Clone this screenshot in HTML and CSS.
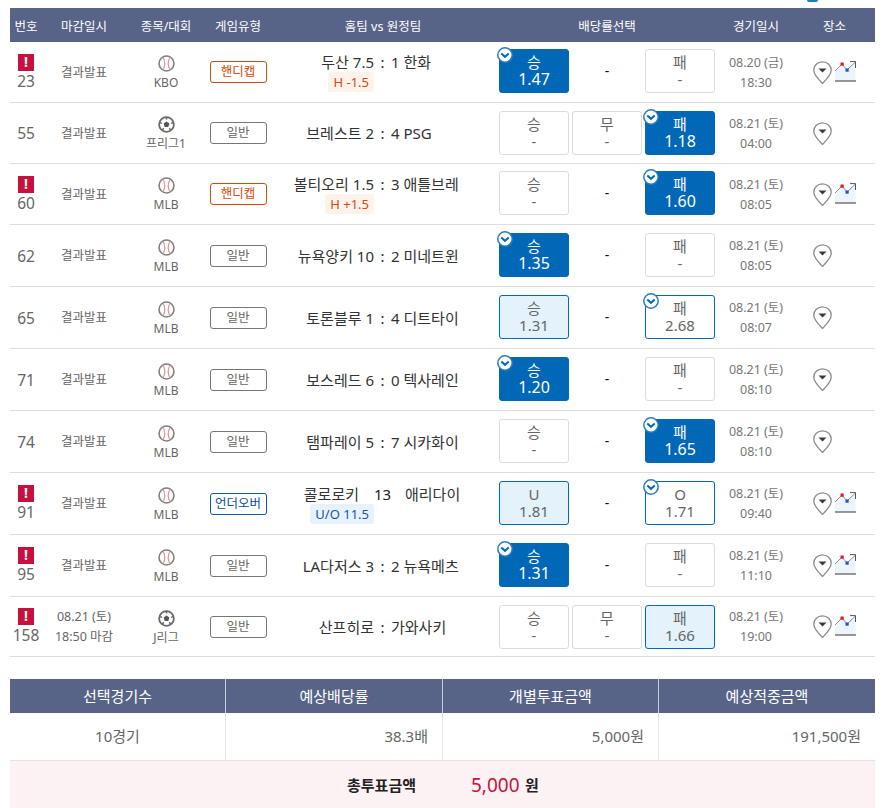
FILE: index.html
```html
<!DOCTYPE html>
<html lang="ko">
<head>
<meta charset="utf-8">
<title>투표 내역</title>
<link rel="stylesheet" href="styles.css">
</head>
<body>
<svg class="defs" width="0" height="0" aria-hidden="true">
  <symbol id="baseball" viewBox="0 0 18 18">
    <circle cx="9" cy="9" r="7.900" fill="#fff" stroke="#808080" stroke-width="1.700"/>
    <path d="M5.400 2.400C7.600 6.400 7.600 11.600 5.400 15.600M12.600 2.400C10.400 6.400 10.400 11.600 12.600 15.600" fill="none" stroke="#dc9a9a" stroke-width="1.200"/>
  </symbol>
  <symbol id="soccer" viewBox="0 0 18 18">
    <circle cx="9" cy="9" r="7.800" fill="#fff" stroke="#6a6a6a" stroke-width="1.900"/>
    <path d="M9 5.800l3 2.200-1.100 3.600H7.100L6 8z" fill="#555"/>
    <path d="M9 1.500v2.200M2 7l2.200.8M16 7l-2.200.8M4.600 15l1.500-2M13.400 15l-1.500-2" stroke="#666" stroke-width="1.600"/>
  </symbol>
  <symbol id="pin" viewBox="0 0 19 23">
    <path d="M9.500 .8C4.500 .8 .8 4.600 .8 9.200c0 4.600 5.200 9.600 8.700 13.200 3.500-3.600 8.700-8.600 8.700-13.200C18.200 4.600 14.500 .8 9.500 .8z" fill="#fff" stroke="#8c8c8c" stroke-width="1.300"/>
    <path d="M5.500 7.500h8L9.500 11.500z" fill="#3a3a3a"/>
  </symbol>
  <symbol id="chart" viewBox="0 0 21 21">
    <path d="M0 10L7 3l5 6L20.500 1V20H0z" fill="#edf4fc"/>
    <path d="M0 10L7 3l5 6L20.500 1" fill="none" stroke="#8a8f96" stroke-width="1"/>
    <path d="M15 .6h5.500V7" fill="none" stroke="#555" stroke-width="1"/>
    <path d="M0 20h21" stroke="#555" stroke-width="1.200"/>
    <rect x="5.500" y="1.500" width="3.200" height="3.200" fill="#e2142d"/>
    <rect x="10.500" y="7.500" width="3.200" height="3.200" fill="#1a55cf"/>
  </symbol>
  <symbol id="check" viewBox="0 0 16 16">
    <circle cx="8" cy="8" r="7.200" fill="#fff" stroke="#2f7cc0" stroke-width="1.500"/>
    <path d="M4.300 6.500L8 9.800l3.700-3.300" fill="none" stroke="#0167b7" stroke-width="2"/>
  </symbol>
</svg>

<div class="top-mark"></div>

<main class="page">
  <div class="head-row">
    <div>번호</div><div>마감일시</div><div>종목/대회</div><div>게임유형</div>
    <div>홈팀 vs 원정팀</div><div>배당률선택</div><div>경기일시</div><div>장소</div>
  </div>

  <div class="row row-61 row-up">
    <div class="no"><span class="flag">!</span><span>23</span></div>
    <div class="close">결과발표</div>
    <div class="sport"><svg class="ball"><use href="#baseball"/></svg><span>KBO</span></div>
    <div class="type"><span class="badge badge-hc">핸디캡</span></div>
    <div class="match"><span class="home">두산 7.5</span><span class="colon">:</span><span class="away">1 한화</span><span class="tag tag-hc">H -1.5</span></div>
    <div class="odds">
      <div class="bet on"><svg class="tick"><use href="#check"/></svg><b>승</b><i>1.47</i></div>
      <div class="none">-</div>
      <div class="bet"><b>패</b><i>-</i></div>
    </div>
    <div class="when">08.20 (금)<br>18:30</div>
    <div class="place"><svg class="pin"><use href="#pin"/></svg><svg class="chart"><use href="#chart"/></svg></div>
  </div>

  <div class="row row-61">
    <div class="no"><span>55</span></div>
    <div class="close">결과발표</div>
    <div class="sport"><svg class="ball"><use href="#soccer"/></svg><span>프리그1</span></div>
    <div class="type"><span class="badge">일반</span></div>
    <div class="match"><span class="home">브레스트 2</span><span class="colon">:</span><span class="away">4 PSG</span></div>
    <div class="odds">
      <div class="bet"><b>승</b><i>-</i></div>
      <div class="bet"><b>무</b><i>-</i></div>
      <div class="bet on"><svg class="tick"><use href="#check"/></svg><b>패</b><i>1.18</i></div>
    </div>
    <div class="when">08.21 (토)<br>04:00</div>
    <div class="place"><svg class="pin"><use href="#pin"/></svg></div>
  </div>

  <div class="row row-61 row-up">
    <div class="no"><span class="flag">!</span><span>60</span></div>
    <div class="close">결과발표</div>
    <div class="sport"><svg class="ball"><use href="#baseball"/></svg><span>MLB</span></div>
    <div class="type"><span class="badge badge-hc">핸디캡</span></div>
    <div class="match"><span class="home">볼티오리 1.5</span><span class="colon">:</span><span class="away">3 애틀브레</span><span class="tag tag-hc">H +1.5</span></div>
    <div class="odds">
      <div class="bet"><b>승</b><i>-</i></div>
      <div class="none">-</div>
      <div class="bet on"><svg class="tick"><use href="#check"/></svg><b>패</b><i>1.60</i></div>
    </div>
    <div class="when">08.21 (토)<br>08:05</div>
    <div class="place"><svg class="pin"><use href="#pin"/></svg><svg class="chart"><use href="#chart"/></svg></div>
  </div>

  <div class="row">
    <div class="no"><span>62</span></div>
    <div class="close">결과발표</div>
    <div class="sport"><svg class="ball"><use href="#baseball"/></svg><span>MLB</span></div>
    <div class="type"><span class="badge">일반</span></div>
    <div class="match"><span class="home">뉴욕양키 10</span><span class="colon">:</span><span class="away">2 미네트윈</span></div>
    <div class="odds">
      <div class="bet on"><svg class="tick"><use href="#check"/></svg><b>승</b><i>1.35</i></div>
      <div class="none">-</div>
      <div class="bet"><b>패</b><i>-</i></div>
    </div>
    <div class="when">08.21 (토)<br>08:05</div>
    <div class="place"><svg class="pin"><use href="#pin"/></svg></div>
  </div>

  <div class="row">
    <div class="no"><span>65</span></div>
    <div class="close">결과발표</div>
    <div class="sport"><svg class="ball"><use href="#baseball"/></svg><span>MLB</span></div>
    <div class="type"><span class="badge">일반</span></div>
    <div class="match"><span class="home">토론블루 1</span><span class="colon">:</span><span class="away">4 디트타이</span></div>
    <div class="odds">
      <div class="bet light"><b>승</b><i>1.31</i></div>
      <div class="none">-</div>
      <div class="bet pick"><svg class="tick"><use href="#check"/></svg><b>패</b><i>2.68</i></div>
    </div>
    <div class="when">08.21 (토)<br>08:07</div>
    <div class="place"><svg class="pin"><use href="#pin"/></svg></div>
  </div>

  <div class="row">
    <div class="no"><span>71</span></div>
    <div class="close">결과발표</div>
    <div class="sport"><svg class="ball"><use href="#baseball"/></svg><span>MLB</span></div>
    <div class="type"><span class="badge">일반</span></div>
    <div class="match"><span class="home">보스레드 6</span><span class="colon">:</span><span class="away">0 텍사레인</span></div>
    <div class="odds">
      <div class="bet on"><svg class="tick"><use href="#check"/></svg><b>승</b><i>1.20</i></div>
      <div class="none">-</div>
      <div class="bet"><b>패</b><i>-</i></div>
    </div>
    <div class="when">08.21 (토)<br>08:10</div>
    <div class="place"><svg class="pin"><use href="#pin"/></svg></div>
  </div>

  <div class="row">
    <div class="no"><span>74</span></div>
    <div class="close">결과발표</div>
    <div class="sport"><svg class="ball"><use href="#baseball"/></svg><span>MLB</span></div>
    <div class="type"><span class="badge">일반</span></div>
    <div class="match"><span class="home">탬파레이 5</span><span class="colon">:</span><span class="away">7 시카화이</span></div>
    <div class="odds">
      <div class="bet"><b>승</b><i>-</i></div>
      <div class="none">-</div>
      <div class="bet on"><svg class="tick"><use href="#check"/></svg><b>패</b><i>1.65</i></div>
    </div>
    <div class="when">08.21 (토)<br>08:10</div>
    <div class="place"><svg class="pin"><use href="#pin"/></svg></div>
  </div>

  <div class="row">
    <div class="no"><span class="flag">!</span><span>91</span></div>
    <div class="close">결과발표</div>
    <div class="sport"><svg class="ball"><use href="#baseball"/></svg><span>MLB</span></div>
    <div class="type"><span class="badge badge-uo">언더오버</span></div>
    <div class="match match-wide"><span class="home">콜로로키</span><span class="colon">13</span><span class="away">애리다이</span><span class="tag tag-uo">U/O 11.5</span></div>
    <div class="odds">
      <div class="bet light"><b>U</b><i>1.81</i></div>
      <div class="none">-</div>
      <div class="bet pick"><svg class="tick"><use href="#check"/></svg><b>O</b><i>1.71</i></div>
    </div>
    <div class="when">08.21 (토)<br>09:40</div>
    <div class="place"><svg class="pin"><use href="#pin"/></svg><svg class="chart"><use href="#chart"/></svg></div>
  </div>

  <div class="row">
    <div class="no"><span class="flag">!</span><span>95</span></div>
    <div class="close">결과발표</div>
    <div class="sport"><svg class="ball"><use href="#baseball"/></svg><span>MLB</span></div>
    <div class="type"><span class="badge">일반</span></div>
    <div class="match"><span class="home">LA다저스 3</span><span class="colon">:</span><span class="away">2 뉴욕메츠</span></div>
    <div class="odds">
      <div class="bet on"><svg class="tick"><use href="#check"/></svg><b>승</b><i>1.31</i></div>
      <div class="none">-</div>
      <div class="bet"><b>패</b><i>-</i></div>
    </div>
    <div class="when">08.21 (토)<br>11:10</div>
    <div class="place"><svg class="pin"><use href="#pin"/></svg><svg class="chart"><use href="#chart"/></svg></div>
  </div>

  <div class="row row-60">
    <div class="no"><span class="flag">!</span><span>158</span></div>
    <div class="close close-time">08.21 (토)<br>18:50 마감</div>
    <div class="sport"><svg class="ball"><use href="#soccer"/></svg><span>J리그</span></div>
    <div class="type"><span class="badge">일반</span></div>
    <div class="match"><span class="home">산프히로</span><span class="colon">:</span><span class="away">가와사키</span></div>
    <div class="odds">
      <div class="bet"><b>승</b><i>-</i></div>
      <div class="bet"><b>무</b><i>-</i></div>
      <div class="bet light"><b>패</b><i>1.66</i></div>
    </div>
    <div class="when">08.21 (토)<br>19:00</div>
    <div class="place"><svg class="pin"><use href="#pin"/></svg><svg class="chart"><use href="#chart"/></svg></div>
  </div>

  <section class="summary">
    <div class="sum-head">선택경기수</div>
    <div class="sum-head">예상배당률</div>
    <div class="sum-head">개별투표금액</div>
    <div class="sum-head">예상적중금액</div>
    <div class="sum-cell sum-center">10경기</div>
    <div class="sum-cell">38.3배</div>
    <div class="sum-cell">5,000원</div>
    <div class="sum-cell">191,500원</div>
  </section>
  <div class="total">
    <strong class="total-label">총투표금액</strong>
    <span class="total-num">5,000</span>
    <strong class="total-unit">원</strong>
  </div>
</main>
</body>
</html>
```

FILE: styles.css
```css
* { box-sizing: border-box; }
html, body { margin: 0; padding: 0; background: #fff; }
body {
  font-family: "Noto Sans", "Noto Sans CJK KR", sans-serif;
  color: #555;
  font-size: 13px;
  overflow: hidden;
  height: 808px;
}
.defs { display: block; height: 0; }
.top-mark {
  width: 11px;
  height: 2px;
  margin-left: 807px;
  background: #1b7cc4;
  border-radius: 0 0 6px 6px;
}
.page { width: 865px; margin: 6px 0 0 10px; }

.head-row, .row {
  display: grid;
  grid-template-columns: 32px 84px 80px 64px 226px 222px 76px 81px;
}
.head-row {
  height: 34px;
  background: #586487;
  color: #fff;
  font-size: 12.500px;
  align-items: center;
  text-align: center;
}
.row {
  height: 62px;
  border-bottom: 1px solid #dedede;
  align-items: center;
  text-align: center;
}
.row-61 { height: 61px; }
.row-60 { height: 60px; }

.no { display: flex; flex-direction: column; align-items: center; font-size: 15.500px; line-height: 20px; color: #666; }
.flag {
  width: 16px;
  height: 17px;
  background: #c8103f;
  color: #fff;
  font-size: 14px;
  font-weight: 700;
  line-height: 16px;
  text-align: center;
}
.close { font-size: 12.500px; line-height: 20px; color: #666; padding-top: 1px; }
.sport {
  display: flex;
  flex-direction: column;
  align-items: center;
  padding-top: 5px;
  font-size: 12px;
  line-height: 22px;
  color: #666;
}
.ball { width: 17px; height: 17px; display: block; }
.badge {
  display: block;
  width: 57px;
  height: 22px;
  margin: 0 auto;
  border: 1px solid #777;
  border-radius: 3px;
  font-size: 12.500px;
  line-height: 19px;
  color: #666;
}
.badge-hc { border-color: #d34a0c; color: #d34a0c; }
.badge-uo { border-color: #0a5cb0; color: #0a4f9e; }

.match {
  display: grid;
  grid-template-columns: 104px 17px 105px;
  font-size: 15px;
  line-height: 20px;
  color: #333;
}
.home { text-align: right; white-space: nowrap; }
.away { text-align: left; white-space: nowrap; }
.colon { text-align: center; color: #222; }
.match-wide .home { padding-right: 15px; }
.match-wide .away { padding-left: 14px; }
.tag {
  grid-column: 1;
  justify-self: end;
  height: 20px;
  padding: 0 5px;
  border-radius: 3px;
  font-size: 13px;
  line-height: 20px;
}
.tag-hc { background: #fdf3ea; color: #d9480f; }
.tag-uo { background: #e6f2fd; color: #1a55b0; }

.odds {
  display: grid;
  grid-template-columns: 70px 70px 70px;
  gap: 3px;
  padding-left: 3px;
  align-self: start;
  margin-top: 8px;
}
.row-up .odds { margin-top: 7px; }
.none { line-height: 44px; color: #111; font-size: 14px; }
.bet {
  position: relative;
  height: 44px;
  display: flex;
  flex-direction: column;
  align-items: center;
  justify-content: center;
  border: 1px solid #dcdcdc;
  border-radius: 3px;
  background: #fff;
  color: #666;
}
.bet b, .bet i { font-style: normal; font-weight: 400; display: block; font-size: 15px; line-height: 17px; }
.bet.on { background: #0167b7; border-color: #0167b7; color: #fff; }
.bet.on i { font-size: 16px; }
.bet.light { background: #e3f2fb; border-color: #0167b7; }
.bet.pick { border-color: #0167b7; }
.tick { position: absolute; left: -3px; top: -3px; width: 16px; height: 16px; }

.when { font-size: 12.500px; line-height: 20px; color: #777; padding-top: 1px; }
.place { display: flex; align-items: flex-start; gap: 3px; padding-left: 19px; }
.pin { width: 19px; height: 23px; display: block; }
.chart { width: 21px; height: 21px; display: block; }

.summary {
  display: grid;
  grid-template-columns: 215px 217px 216px 217px;
  margin-top: 22px;
}
.sum-head {
  height: 34px;
  background: #586487;
  color: #fff;
  font-size: 15px;
  line-height: 34px;
  text-align: center;
  border-left: 1px solid #c9cedb;
}
.sum-cell {
  height: 48px;
  font-size: 15px;
  line-height: 46px;
  color: #666;
  text-align: right;
  padding-right: 14px;
  border-left: 1px solid #e3e3e3;
  border-bottom: 1px solid #e3e3e3;
}
.sum-head:first-child, .sum-cell:nth-child(5) { border-left: 0; }
.sum-center { text-align: center; padding-right: 0; }
.total {
  height: 47px;
  background: #fcf1f3;
  display: flex;
  align-items: center;
  color: #222;
  padding-left: 337px;
}
.total-label { font-size: 15px; font-weight: 700; width: 124px; }
.total-num { font-size: 19px; color: #c8133f; width: 54px; }
.total-unit { font-size: 15px; font-weight: 700; }
```
